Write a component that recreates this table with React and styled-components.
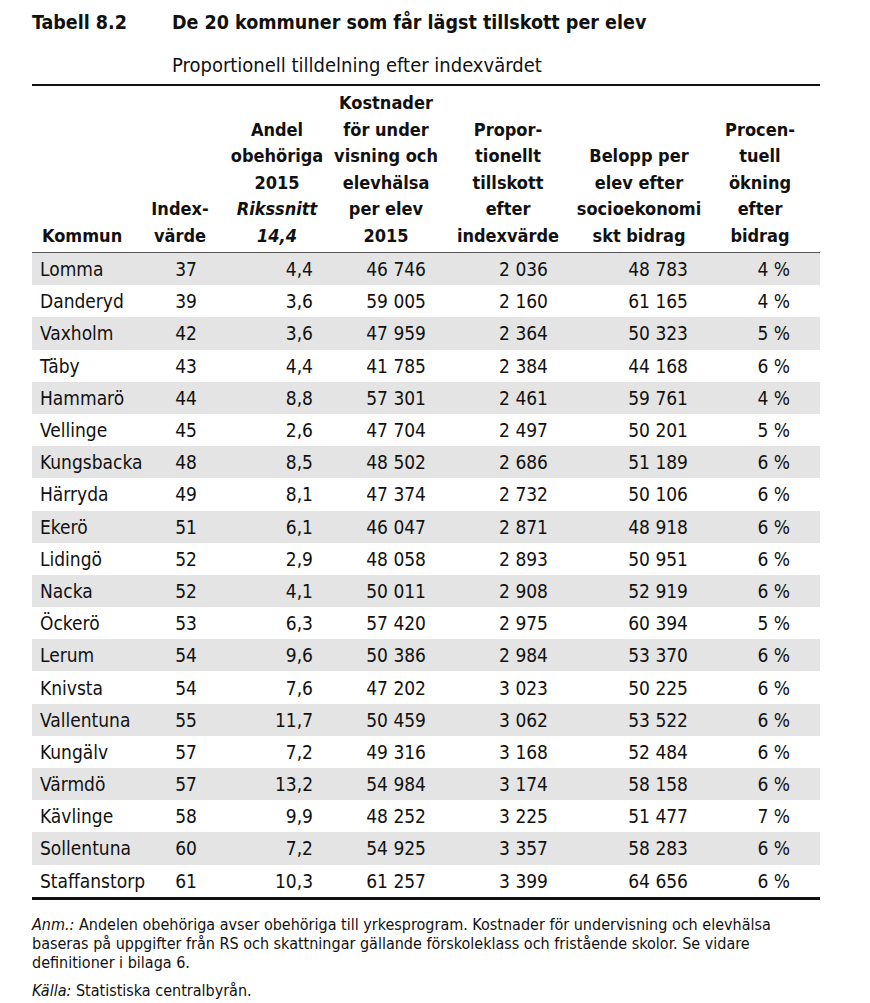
import React from 'react'
import styled, { createGlobalStyle } from 'styled-components'

const GlobalStyle = createGlobalStyle`
  html, body {
    margin: 0;
    padding: 0;
    background: #ffffff;
  }
  body {
    font-family: "DejaVu Sans Condensed", "DejaVu Sans", sans-serif;
    font-stretch: condensed;
    color: #111;
  }
`

const COLS = '118px 74px 106px 112px 132px 130px 116px'

const Page = styled.div`
  width: 788px;
  padding: 10px 0 0 32px;
`

const TitleRow = styled.div`
  display: flex;
  font-weight: 700;
  font-size: 19.5px;
  line-height: 26px;
`

const TitleNum = styled.div`
  width: 140px;
`

const Subtitle = styled.div`
  margin: 17px 0 0 140px;
  font-size: 20px;
  line-height: 24px;
`

const Table = styled.div`
  margin-top: 7px;
  border-top: 2.5px solid #111;
  border-bottom: 3px solid #111;
`

const HeaderRow = styled.div`
  display: grid;
  grid-template-columns: ${COLS};
  height: 166px;
  border-bottom: 1.5px solid #555;
  font-weight: 700;
  font-size: 18px;
  line-height: 26.5px;
`

const HeadCell = styled.div`
  align-self: end;
  padding: 0 ${({ $pr }) => $pr || 0}px 3px ${({ $pl }) => $pl || 0}px;
  text-align: ${({ $align }) => $align || 'center'};
  white-space: nowrap;
  em {
    font-style: italic;
  }
`

const BodyRow = styled.div`
  display: grid;
  grid-template-columns: ${COLS};
  height: 32.2px;
  align-items: center;
  background: ${({ $shaded }) => ($shaded ? '#e4e4e4' : '#ffffff')};
  font-size: 19px;
`

const Cell = styled.div`
  padding: 0 ${({ $pr }) => $pr || 0}px 0 ${({ $pl }) => $pl || 0}px;
  text-align: ${({ $align }) => $align || 'right'};
  white-space: nowrap;
`

const Notes = styled.div`
  padding-top: 15px;
  font-size: 16px;
  line-height: 19px;
`

const Note = styled.p`
  margin: 0 0 ${({ $gap }) => $gap || 0}px 0;
  white-space: nowrap;
`

const columns = [
  { head: { align: 'left', pl: 10 }, body: { align: 'left', pl: 8 } },
  { head: { pr: 14 }, body: { pr: 27 } },
  { head: {}, body: { pr: 17 } },
  { head: {}, body: { pr: 16 } },
  { head: {}, body: { pr: 26 } },
  { head: {}, body: { pr: 16 } },
  { head: { pr: 4 }, body: { pr: 30 } },
]

const headers = [
  <>Kommun</>,
  <>Index-<br />värde</>,
  <>Andel<br />obehöriga<br />2015<br /><em>Rikssnitt</em><br /><em>14,4</em></>,
  <>Kostnader<br />för under<br />visning och<br />elevhälsa<br />per elev<br />2015</>,
  <>Propor-<br />tionellt<br />tillskott<br />efter<br />indexvärde</>,
  <>Belopp per<br />elev efter<br />socioekonomi<br />skt bidrag</>,
  <>Procen-<br />tuell<br />ökning<br />efter<br />bidrag</>,
]

const rows = [
  ['Lomma', '37', '4,4', '46 746', '2 036', '48 783', '4 %'],
  ['Danderyd', '39', '3,6', '59 005', '2 160', '61 165', '4 %'],
  ['Vaxholm', '42', '3,6', '47 959', '2 364', '50 323', '5 %'],
  ['Täby', '43', '4,4', '41 785', '2 384', '44 168', '6 %'],
  ['Hammarö', '44', '8,8', '57 301', '2 461', '59 761', '4 %'],
  ['Vellinge', '45', '2,6', '47 704', '2 497', '50 201', '5 %'],
  ['Kungsbacka', '48', '8,5', '48 502', '2 686', '51 189', '6 %'],
  ['Härryda', '49', '8,1', '47 374', '2 732', '50 106', '6 %'],
  ['Ekerö', '51', '6,1', '46 047', '2 871', '48 918', '6 %'],
  ['Lidingö', '52', '2,9', '48 058', '2 893', '50 951', '6 %'],
  ['Nacka', '52', '4,1', '50 011', '2 908', '52 919', '6 %'],
  ['Öckerö', '53', '6,3', '57 420', '2 975', '60 394', '5 %'],
  ['Lerum', '54', '9,6', '50 386', '2 984', '53 370', '6 %'],
  ['Knivsta', '54', '7,6', '47 202', '3 023', '50 225', '6 %'],
  ['Vallentuna', '55', '11,7', '50 459', '3 062', '53 522', '6 %'],
  ['Kungälv', '57', '7,2', '49 316', '3 168', '52 484', '6 %'],
  ['Värmdö', '57', '13,2', '54 984', '3 174', '58 158', '6 %'],
  ['Kävlinge', '58', '9,9', '48 252', '3 225', '51 477', '7 %'],
  ['Sollentuna', '60', '7,2', '54 925', '3 357', '58 283', '6 %'],
  ['Staffanstorp', '61', '10,3', '61 257', '3 399', '64 656', '6 %'],
]

const App = () => {
  return (
    <Page>
      <GlobalStyle />
      <TitleRow>
        <TitleNum>Tabell 8.2</TitleNum>
        <div>De 20 kommuner som får lägst tillskott per elev</div>
      </TitleRow>
      <Subtitle>Proportionell tilldelning efter indexvärdet</Subtitle>
      <Table>
        <HeaderRow>
          {headers.map((h, i) => (
            <HeadCell key={i} $align={columns[i].head.align} $pl={columns[i].head.pl} $pr={columns[i].head.pr}>
              {h}
            </HeadCell>
          ))}
        </HeaderRow>
        {rows.map((r, ri) => (
          <BodyRow key={r[0]} $shaded={ri % 2 === 0}>
            {r.map((v, ci) => (
              <Cell key={ci} $align={columns[ci].body.align} $pl={columns[ci].body.pl} $pr={columns[ci].body.pr}>
                {v.replace(' ', '\u00a0')}
              </Cell>
            ))}
          </BodyRow>
        ))}
      </Table>
      <Notes>
        <Note $gap={9}>
          <em>Anm.:</em> Andelen obehöriga avser obehöriga till yrkesprogram. Kostnader för undervisning och elevhälsa
          <br />
          baseras på uppgifter från RS och skattningar gällande förskoleklass och fristående skolor. Se vidare
          <br />
          definitioner i bilaga 6.
        </Note>
        <Note>
          <em>Källa:</em> Statistiska centralbyrån.
        </Note>
      </Notes>
    </Page>
  )
}

export default App
